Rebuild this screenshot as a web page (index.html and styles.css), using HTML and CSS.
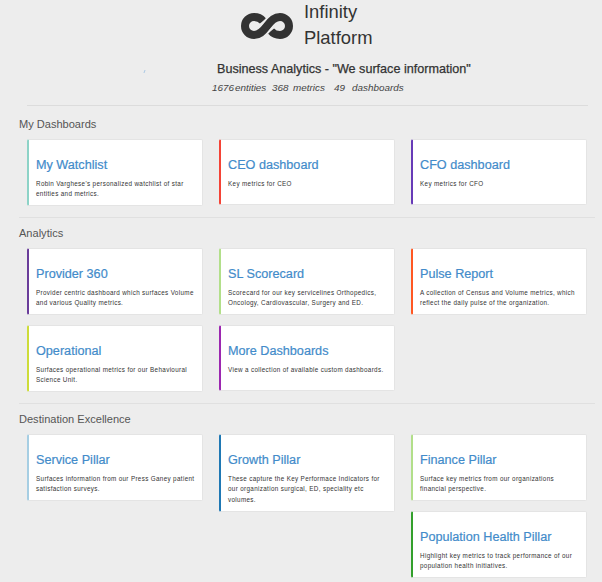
FILE: index.html
```html
<!DOCTYPE html>
<html lang="en">
<head>
<meta charset="utf-8">
<title>Infinity Platform</title>
<link rel="stylesheet" href="styles.css">
</head>
<body>
<header class="header">
  <div class="brand">
    <svg class="logo" viewBox="0 0 52 28" aria-hidden="true">
      <path class="loop" d="M22 9C19.500 6 16.500 5 13 5a9 9 0 0 0 0 18c5.200 0 8.500-3.100 13-9s7.800-9 13-9a9 9 0 0 1 0 18c-3.500 0-6.500-1-9-4"/>
      <path class="cut" d="M19.500 13.700L26.700 5M25.300 23L32.500 14.300"/>
    </svg>
    <div class="name">Infinity<br>Platform</div>
  </div>
  <div class="tagline">Business Analytics - "We surface information"</div>
  <div class="stats"><span class="entities">1676</span><span class="entities-label">entities</span><span class="metrics">368</span><span class="metrics-label">metrics</span><span class="boards">49</span><span>dashboards</span></div>
</header>
<main>
  <section class="section">
    <h2>My Dashboards</h2>
    <div class="columns">
      <div class="column"><article class="card tall teal"><h3>My Watchlist</h3><p>Robin Varghese's personalized watchlist of star<br>entities and metrics.</p></article></div>
      <div class="column"><article class="card red"><h3>CEO dashboard</h3><p>Key metrics for CEO</p></article></div>
      <div class="column"><article class="card indigo"><h3>CFO dashboard</h3><p>Key metrics for CFO</p></article></div>
    </div>
  </section>
  <section class="section analytics">
    <h2>Analytics</h2>
    <div class="columns">
      <div class="column">
        <article class="card tall purple"><h3>Provider 360</h3><p>Provider centric dashboard which surfaces Volume<br>and various Quality metrics.</p></article>
        <article class="card tall lime"><h3>Operational</h3><p>Surfaces operational metrics for our Behavioural<br>Science Unit.</p></article>
      </div>
      <div class="column">
        <article class="card tall green"><h3>SL Scorecard</h3><p>Scorecard for our key servicelines Orthopedics,<br>Oncology, Cardiovascular, Surgery and ED.</p></article>
        <article class="card magenta"><h3>More Dashboards</h3><p>View a collection of available custom dashboards.</p></article>
      </div>
      <div class="column"><article class="card tall orange"><h3>Pulse Report</h3><p>A collection of Census and Volume metrics, which<br>reflect the daily pulse of the organization.</p></article></div>
    </div>
  </section>
  <section class="section">
    <h2>Destination Excellence</h2>
    <div class="columns">
      <div class="column"><article class="card tall sky"><h3>Service Pillar</h3><p>Surfaces information from our Press Ganey patient<br>satisfaction surveys.</p></article></div>
      <div class="column"><article class="card taller blue"><h3>Growth Pillar</h3><p>These capture the Key Performace Indicators for<br>our organization surgical, ED, speciality etc<br>volumes.</p></article></div>
      <div class="column">
        <article class="card tall green"><h3>Finance Pillar</h3><p>Surface key metrics from our organizations<br>financial perspective.</p></article>
        <article class="card tall forest"><h3>Population Health Pillar</h3><p>Highlight key metrics to track performance of our<br>population health initiatives.</p></article>
      </div>
    </div>
  </section>
</main>
</body>
</html>
```
FILE: styles.css
```css
* { box-sizing: border-box; }
html { overflow: hidden; }
body { margin: 0; background: #ededed; color: #333; font-family: "Liberation Sans", Arial, sans-serif; }
h2, h3, p { margin: 0; font-weight: 400; }
.header { height: 106px; margin: 0 14px 0 27px; border-bottom: 1px solid #dcdcdc; }
.brand { display: flex; height: 61px; padding-left: 214px; }
.logo { width: 52px; height: 28px; margin-top: 12px; }
.loop { fill: none; stroke: #333; stroke-width: 8; }
.cut { fill: none; stroke: #ededed; stroke-width: 1.2; }
.name { margin-left: 11px; font-size: 18.400px; line-height: 26px; margin-top: -1px; }
.tagline { display: flex; height: 16px; padding-left: 117px; font-size: 12.600px; line-height: 16px; white-space: nowrap; -webkit-text-stroke: 0.250px #333; }
.tagline::before { content: ""; width: 1px; height: 3px; margin: 9px 72px 0 0; background: #a9c8e4; transform: skewX(-20deg); }
.stats { display: flex; margin-top: 4px; padding-left: 185px; font-size: 9.900px; line-height: 14px; font-style: italic; white-space: nowrap; color: #444; }
.entities { width: 23px; }
.entities-label { width: 37px; }
.metrics { width: 21px; }
.metrics-label { width: 41px; }
.boards { width: 18px; }
.section { height: 111px; margin: 0 7px 0 19px; border-bottom: 1px solid #e0e0e0; }
.section.analytics { height: 186px; }
.section:first-child { height: 112px; }
.section:last-child { height: 179px; border-bottom: 0; }
.section h2 { height: 30px; padding-top: 8px; font-size: 11.050px; line-height: 14px; color: #555; }
.section:first-child h2 { height: 33px; padding-top: 11px; }
.columns { display: grid; grid-template-columns: repeat(3, 176px); column-gap: 16px; padding-left: 8px; }
.column { display: flex; flex-direction: column; gap: 11px; }
.card { height: 66px; padding: 17px 0 0 7px; border: 1px solid #e4e4e4; border-left: 2px solid; border-radius: 2px; background: #fff; white-space: nowrap; }
.card.tall { height: 67px; margin-bottom: -1px; }
.card.taller { height: 78px; }
.card h3 { font-size: 12.650px; line-height: 16px; color: #428bca; -webkit-text-stroke: 0.200px #428bca; }
.card p { margin-top: 5.500px; font-size: 6.300px; line-height: 10.600px; letter-spacing: 0.340px; }
.teal { border-left-color: #8dd3c7; }
.red { border-left-color: #f44336; }
.indigo { border-left-color: #673ab7; }
.purple { border-left-color: #6a3d9a; }
.lime { border-left-color: #cddc39; }
.green { border-left-color: #b2df8a; }
.magenta { border-left-color: #9c27b0; }
.orange { border-left-color: #ff5722; }
.sky { border-left-color: #a6cee3; }
.blue { border-left-color: #1f78b4; }
.forest { border-left-color: #33a02c; }
```
